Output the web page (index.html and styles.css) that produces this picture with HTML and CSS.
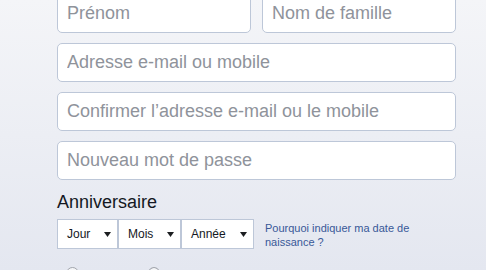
FILE: index.html
```html
<!DOCTYPE html>
<html lang="fr">
<head>
<meta charset="utf-8">
<title>Inscription</title>
<link rel="stylesheet" href="styles.css">
</head>
<body>
<div class="page">
  <form class="reg">
    <div class="name-row">
      <input class="field half" type="text" placeholder="Prénom">
      <input class="field half" type="text" placeholder="Nom de famille">
    </div>
    <input class="field" type="text" placeholder="Adresse e-mail ou mobile">
    <input class="field" type="text" placeholder="Confirmer l’adresse e-mail ou le mobile">
    <input class="field" type="password" placeholder="Nouveau mot de passe">
    <div class="label">Anniversaire</div>
    <div class="bday">
      <div class="selects">
        <div class="sel sel-day"><span>Jour</span><svg class="arrow" width="7" height="5" viewBox="0 0 7 5"><path d="M0 0H7L3.5 5Z" fill="#1c1e21"/></svg></div>
        <div class="sel sel-month"><span>Mois</span><svg class="arrow" width="7" height="5" viewBox="0 0 7 5"><path d="M0 0H7L3.5 5Z" fill="#1c1e21"/></svg></div>
        <div class="sel sel-year"><span>Année</span><svg class="arrow" width="7" height="5" viewBox="0 0 7 5"><path d="M0 0H7L3.5 5Z" fill="#1c1e21"/></svg></div>
      </div>
      <a class="why" href="#">Pourquoi indiquer ma date de naissance ?</a>
    </div>
    <div class="gender">
      <label class="opt"><span class="radio"></span><span class="opt-text">Femme</span></label>
      <label class="opt"><span class="radio"></span><span class="opt-text">Homme</span></label>
    </div>
  </form>
</div>
</body>
</html>
```
FILE: styles.css
```css
html, body {
  margin: 0;
  padding: 0;
}
body {
  width: 486px;
  height: 270px;
  overflow: hidden;
  background: linear-gradient(#f4f5f8, #e4e7f0);
  font-family: "Liberation Sans", Arial, sans-serif;
}
.page {
  padding-left: 57px;
}
.reg {
  width: 399px;
  margin-top: -6px;
  display: flex;
  flex-direction: column;
}
.name-row {
  display: flex;
  gap: 11px;
  margin-bottom: 10px;
}
.field {
  box-sizing: border-box;
  width: 399px;
  height: 39px;
  margin: 0 0 10px 0;
  padding: 0 9px;
  border: 1px solid #bdc7d8;
  border-radius: 5px;
  background: #fff;
  font-family: "Liberation Sans", Arial, sans-serif;
  font-size: 18px;
  color: #1d2129;
  outline: none;
}
.name-row .field {
  margin: 0;
}
.field.half {
  width: 194px;
}
.field::placeholder {
  color: #8f939b;
  opacity: 1;
}
.label {
  margin-top: 1px;
  font-size: 18px;
  line-height: 22px;
  color: #141823;
}
.bday {
  display: flex;
  align-items: flex-start;
  margin-top: 6px;
}
.selects {
  display: flex;
}
.sel {
  box-sizing: border-box;
  height: 30px;
  display: flex;
  align-items: center;
  padding: 0 6px 0 9px;
  border: 1px solid #bdc7d8;
  background: #fff;
  font-size: 12px;
  color: #141823;
}
.sel span {
  flex: 1;
}
.sel-day { width: 61px; }
.sel-month { width: 63px; }
.sel-year { width: 73px; }
.arrow {
  display: block;
}
.why {
  width: 150px;
  margin: 2px 0 0 11px;
  font-size: 11px;
  line-height: 14px;
  color: #385898;
  text-decoration: none;
}
.gender {
  display: flex;
  gap: 24px;
  margin-top: 18px;
  padding-left: 9px;
}
.opt {
  display: flex;
  align-items: flex-start;
  gap: 4px;
  font-size: 12px;
  color: #141823;
  width: 58px;
}
.opt-text {
  padding-top: 4px;
}
.radio {
  box-sizing: border-box;
  width: 13px;
  height: 13px;
  border: 1px solid #a0a4ab;
  border-radius: 50%;
  background: #f5f6f8;
}
```
